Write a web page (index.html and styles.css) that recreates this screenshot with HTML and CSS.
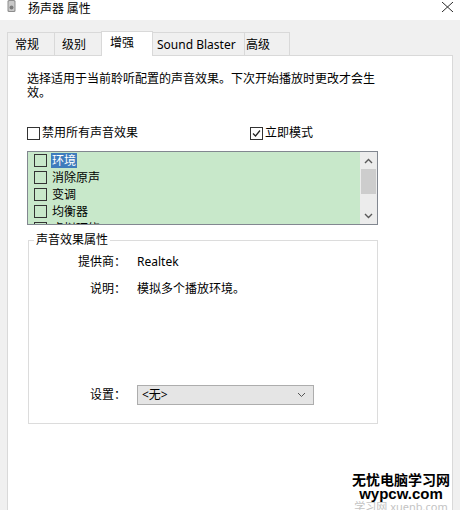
FILE: index.html
```html
<!DOCTYPE html>
<html lang="zh-CN">
<head>
    <meta charset="UTF-8">
    <title>扬声器 属性</title>
    <link rel="stylesheet" href="styles.css">
</head>
<body>
    <div class="window">
        <div class="titlebar">
            <svg class="app-icon" width="9" height="12" viewBox="0 0 9 12">
                <rect x="0.5" y="0" width="8" height="12" rx="1.5" fill="#8d8d8d"/>
                <rect x="1.5" y="1" width="6" height="10" rx="1" fill="#c9c9c9"/>
                <circle cx="4.5" cy="7.5" r="2" fill="#7a7a7a"/>
            </svg>
            <span class="title">扬声器 属性</span>
            <svg class="close" width="11" height="10" viewBox="0 0 11 10">
                <path d="M0 0 L11 10 M11 0 L0 10" stroke="#2b2b2b" stroke-width="1"/>
            </svg>
        </div>

        <div class="tabs">
            <div class="tab">常规</div>
            <div class="tab">级别</div>
            <div class="tab active">增强</div>
            <div class="tab tab-sb">Sound Blaster</div>
            <div class="tab tab-adv">高级</div>
        </div>

        <div class="panel">
            <p class="desc">选择适用于当前聆听配置的声音效果。下次开始播放时更改才会生效。</p>

            <div class="options">
                <div class="check"><span class="box"></span>禁用所有声音效果</div>
                <div class="check">
                    <span class="box">
                        <svg width="11" height="11" viewBox="0 0 11 11"><path d="M2 5.5 L4.5 8 L9 2.5" fill="none" stroke="#222" stroke-width="1.2"/></svg>
                    </span>立即模式
                </div>
            </div>

            <div class="listbox">
                <ul class="items">
                    <li class="check"><span class="box"></span><span class="item-text selected">环境</span></li>
                    <li class="check"><span class="box"></span><span class="item-text">消除原声</span></li>
                    <li class="check"><span class="box"></span><span class="item-text">变调</span></li>
                    <li class="check"><span class="box"></span><span class="item-text">均衡器</span></li>
                    <li class="check"><span class="box"></span><span class="item-text">虚拟环绕</span></li>
                </ul>
                <div class="scrollbar">
                    <svg class="arrow" width="9" height="6" viewBox="0 0 9 6"><path d="M1 5 L4.5 1.5 L8 5" fill="none" stroke="#5a5a5a" stroke-width="1.4"/></svg>
                    <div class="track"><div class="thumb"></div></div>
                    <svg class="arrow" width="9" height="6" viewBox="0 0 9 6"><path d="M1 1 L4.5 4.5 L8 1" fill="none" stroke="#5a5a5a" stroke-width="1.4"/></svg>
                </div>
            </div>

            <fieldset class="props">
                <legend>声音效果属性</legend>
                <div class="prop-row">
                    <span class="prop-label">提供商：</span>
                    <span class="prop-value">Realtek</span>
                </div>
                <div class="prop-row">
                    <span class="prop-label">说明：</span>
                    <span class="prop-value">模拟多个播放环境。</span>
                </div>
                <div class="prop-row setting-row">
                    <span class="prop-label">设置：</span>
                    <div class="dropdown">
                        <span>&lt;无&gt;</span>
                        <svg width="9" height="6" viewBox="0 0 9 6"><path d="M1 1 L4.5 4.5 L8 1" fill="none" stroke="#555" stroke-width="1"/></svg>
                    </div>
                </div>
            </fieldset>
        </div>

        <div class="watermark">
            <div class="wm-cn">无忧电脑学习网</div>
            <div class="wm-url">wypcw.com</div>
            <div class="wm-sub">学习网 xuenb.com</div>
        </div>
    </div>
</body>
</html>
```

FILE: styles.css
```css
body {
    margin: 0;
    font-family: "Noto Sans", "Noto Sans CJK SC", sans-serif;
    font-size: 12px;
    line-height: 14px;
    color: #000;
    background: #f0f0f0;
}
.window {
    position: relative;
    width: 460px;
    height: 510px;
    overflow: hidden;
    background: #f0f0f0;
}
.titlebar {
    height: 20px;
    background: #fff;
    display: flex;
    align-items: flex-start;
    padding: 0 7px;
    box-sizing: border-box;
}
.title {
    margin-left: 12px;
    font-family: "Noto Sans CJK SC", sans-serif;
    font-size: 12px;
    line-height: 15px;
}
.close {
    margin-left: auto;
    margin-top: 2px;
}
.tabs {
    height: 35px;
    display: flex;
    align-items: flex-end;
    padding-left: 7px;
    box-sizing: border-box;
}
.tab {
    height: 23px;
    box-sizing: border-box;
    border: 1px solid #d9d9d9;
    border-bottom: none;
    margin-left: -1px;
    padding-left: 7px;
    line-height: 23px;
    width: 48px;
}
.tab:first-child {
    margin-left: 0;
}
.tab.active {
    height: 25px;
    width: 52px;
    background: #fff;
    margin-bottom: -1px;
    line-height: 22px;
    position: relative;
    z-index: 1;
    padding-left: 8px;
}
.tab-sb {
    width: 93px;
    padding-left: 4px;
}
.tab-adv {
    width: 46px;
    padding-left: 1px;
}
.panel {
    margin: 0 7px;
    height: 460px;
    background: #fff;
    border: 1px solid #d9d9d9;
    box-sizing: border-box;
    padding: 16px 0 0 19px;
}
.desc {
    margin: 0;
    width: 350px;
}
.options {
    margin-top: 25px;
    display: grid;
    grid-template-columns: 223px auto;
}
.check {
    display: flex;
    align-items: center;
    height: 16px;
}
.box {
    width: 13px;
    height: 13px;
    box-sizing: border-box;
    border: 1px solid #333;
    margin-right: 2px;
    display: flex;
    align-items: center;
    justify-content: center;
    flex-shrink: 0;
}
.listbox {
    margin-top: 10px;
    width: 351px;
    height: 74px;
    box-sizing: border-box;
    border: 1px solid #828790;
    background: #c8e8ca;
    display: flex;
    overflow: hidden;
}
.items {
    list-style: none;
    margin: 0;
    padding: 0 0 0 6px;
    flex: 1;
}
.items .check {
    height: 17px;
}
.items .box {
    margin-right: 4px;
}
.item-text {
    padding: 0 1px;
    line-height: 15px;
}
.item-text.selected {
    background: #3f7cbc;
    color: #fff;
}
.scrollbar {
    width: 17px;
    background: #ececec;
    display: flex;
    flex-direction: column;
    align-items: center;
}
.arrow {
    margin: 6px 0 5px;
}
.track {
    flex: 1;
    width: 100%;
    padding: 0 1px;
    box-sizing: border-box;
}
.thumb {
    height: 25px;
    background: #cdcdcd;
}
.props {
    margin: 8px 0 0 1px;
    width: 350px;
    box-sizing: border-box;
    border: 1px solid #dcdcdc;
    padding: 7px 0 18px 0;
}
.props legend {
    margin-left: 5px;
    padding: 0 2px;
    line-height: 14px;
}
.prop-row {
    display: flex;
    align-items: center;
    line-height: 16px;
}
.prop-row + .prop-row {
    margin-top: 11px;
}
.prop-label {
    width: 97px;
    text-align: right;
    margin-right: 11px;
    flex-shrink: 0;
}
.setting-row.prop-row {
    margin-top: 88px;
}
.dropdown {
    width: 177px;
    height: 20px;
    box-sizing: border-box;
    border: 1px solid #adadad;
    background: #e5e5e5;
    display: flex;
    align-items: center;
    justify-content: space-between;
    padding: 0 7px 0 4px;
}
.watermark {
    position: absolute;
    right: 10px;
    top: 472px;
    text-align: center;
    font-weight: bold;
}
.wm-cn {
    font-family: "Noto Sans CJK SC", sans-serif;
    font-size: 14px;
    line-height: 15px;
}
.wm-url {
    font-family: "Liberation Sans", sans-serif;
    font-size: 15px;
    line-height: 14px;
}
.wm-sub {
    font-weight: normal;
    color: #c4c4c4;
    font-size: 11px;
    line-height: 11px;
}
```
